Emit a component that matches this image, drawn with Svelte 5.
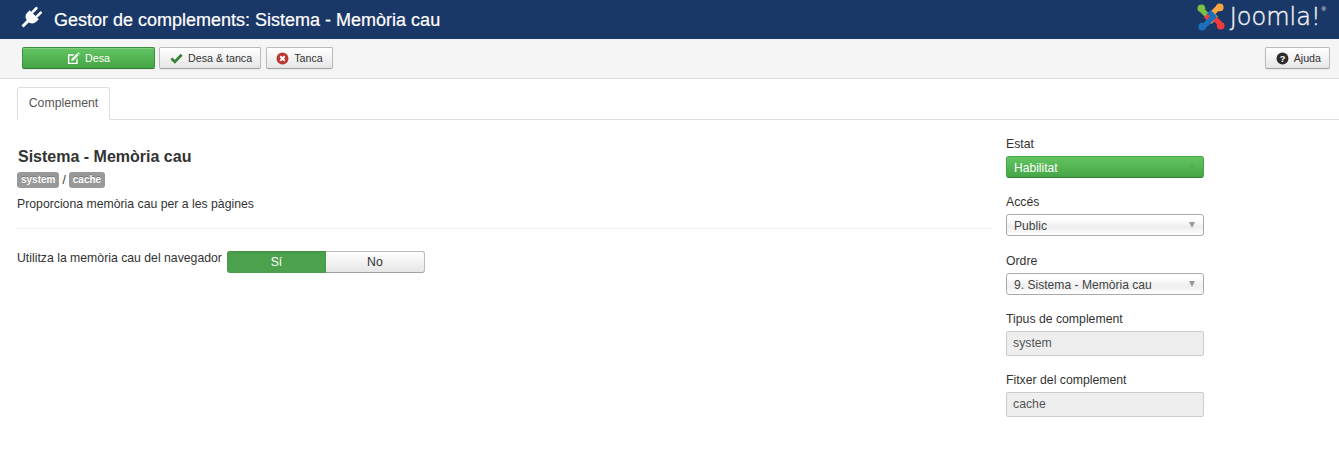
<script>
  const sideFields = [
    { label: 'Accés', value: 'Public' },
    { label: 'Ordre', value: '9. Sistema - Memòria cau' }
  ];
  const readonlyFields = [
    { label: 'Tipus de complement', value: 'system' },
    { label: 'Fitxer del complement', value: 'cache' }
  ];
  // the four logo arms are one shape turned around the centre
  const arms = [
    { angle: 0, color: '#7ac143' },
    { angle: 90, color: '#f9a541' },
    { angle: 180, color: '#ee3c3c' },
    { angle: 270, color: '#1c6fb8' }
  ];
</script>

<header class="topbar">
  <svg class="plug" viewBox="0 0 20 20" width="20" height="20" aria-hidden="true">
    <g fill="#fff" transform="rotate(45 10 10)">
      <rect x="5.6" y="-2" width="2.6" height="8" rx="1.3" />
      <rect x="11.8" y="-2" width="2.6" height="8" rx="1.3" />
      <path d="M3.6 5.4 H16.4 V8.6 Q16.4 13.6 11.6 14.6 H8.4 Q3.6 13.6 3.6 8.6 Z" />
      <rect x="8.5" y="14" width="3" height="8" />
    </g>
  </svg>
  <h1>Gestor de complements: Sistema - Memòria cau</h1>
  <div class="logo">
    <svg viewBox="0 0 32 32" width="28" height="28" aria-hidden="true">
      {#each arms as arm}
        <g transform="rotate({arm.angle} 16 16)">
          <path d="M5 7.5 L16.5 19 L22 13.5" fill="none" stroke={arm.color} stroke-width="6" stroke-linejoin="round" />
          <circle cx="5" cy="6" r="4.4" fill={arm.color} />
        </g>
      {/each}
    </svg>
    <span class="wordmark">Joomla!</span><sup>®</sup>
  </div>
</header>

<div class="toolbar">
  <button class="btn save">
    <svg viewBox="0 0 14 14" width="13" height="13" aria-hidden="true">
      <path fill="#fff" d="M1 2.5 H8 L6.6 4 H2.5 V11.5 H10 V8 L11.5 6.5 V13 H1 Z" />
      <path fill="#fff" d="M5 7.4 L10.8 1.6 L12.6 3.4 L6.8 9.2 L4.6 9.6 Z M11.4 1 L12.2 0.4 L13.8 2 L13.2 2.8 Z" />
    </svg>
    Desa
  </button>
  <button class="btn">
    <svg viewBox="0 0 14 14" width="13" height="13" aria-hidden="true">
      <path fill="none" stroke="#378137" stroke-width="3" d="M1.5 7 L5.2 10.6 L12.5 3" />
    </svg>
    Desa &amp; tanca
  </button>
  <button class="btn close">
    <svg viewBox="0 0 14 14" width="13" height="13" aria-hidden="true">
      <circle cx="7" cy="7" r="6.4" fill="#bd362f" />
      <path stroke="#fff" stroke-width="2" d="M4.6 4.6 L9.4 9.4 M9.4 4.6 L4.6 9.4" />
    </svg>
    Tanca
  </button>
  <button class="btn help">
    <svg viewBox="0 0 14 14" width="13" height="13" aria-hidden="true">
      <circle cx="7" cy="7" r="6.4" fill="#2c2c2c" />
      <text x="7" y="10.4" text-anchor="middle" class="qm">?</text>
    </svg>
    Ajuda
  </button>
</div>

<main>
  <nav class="tabs"><span class="tab">Complement</span></nav>

  <div class="columns">
    <section class="details">
      <h2>Sistema - Memòria cau</h2>
      <div class="badges"><span class="badge">system</span> / <span class="badge">cache</span></div>
      <p class="desc">Proporciona memòria cau per a les pàgines</p>
      <hr />
      <div class="option">
        <span>Utilitza la memòria cau del navegador</span>
        <div class="toggle">
          <span class="on">Sí</span>
          <span class="off">No</span>
        </div>
      </div>
    </section>

    <aside class="side">
      <div class="field">
        <span class="lbl">Estat</span>
        <div class="select green">Habilitat<i class="caret"></i></div>
      </div>
      {#each sideFields as f}
        <div class="field">
          <span class="lbl">{f.label}</span>
          <div class="select">{f.value}<i class="caret"></i></div>
        </div>
      {/each}
      {#each readonlyFields as f}
        <div class="field ro">
          <span class="lbl">{f.label}</span>
          <div class="input">{f.value}</div>
        </div>
      {/each}
    </aside>
  </div>
</main>

<style>
  :global(body) {
    margin: 0;
    background: #fff;
    font-family: "Liberation Sans", Arial, sans-serif;
    font-size: 12.25px;
    color: #333;
    overflow: hidden;
  }

  .topbar {
    height: 39px;
    background: #1a3867;
    display: flex;
    align-items: center;
    padding: 0 13px 0 21px;
    color: #fff;
  }
  .plug { margin-right: 13px; margin-top: -3px; overflow: visible; }
  h1 {
    margin: 0;
    font-size: 18px;
    font-weight: 400;
    line-height: 38px;
    -webkit-text-stroke: 0.2px #fff;
  }
  .logo {
    margin-left: auto;
    display: flex;
    align-items: center;
    gap: 5px;
    height: 39px;
  }
  .logo svg { margin-top: -6px; }
  .wordmark {
    font-family: "DejaVu Sans", Lato, sans-serif;
    font-weight: 200;
    font-size: 24px;
    line-height: 30px;
    margin-top: -5px;
    color: #f2f2f2;
    -webkit-text-stroke: 0.4px #f2f2f2;
  }
  sup {
    font-size: 6px;
    line-height: 6px;
    align-self: flex-start;
    margin: 6px 0 0 -4px;
  }

  .toolbar {
    height: 40px;
    box-sizing: border-box;
    padding: 8px 9px 0 22px;
    background: #f5f5f5;
    border-bottom: 1px solid #ddd;
    display: flex;
    align-items: flex-start;
    gap: 5px;
  }
  .btn {
    height: 22px;
    padding: 0 8px 0 10px;
    display: flex;
    align-items: center;
    justify-content: center;
    gap: 5px;
    font: 10.7px "Liberation Sans", Arial, sans-serif;
    color: #333;
    background: linear-gradient(#fff, #e6e6e6);
    border: 1px solid #bbb;
    border-bottom-color: #a2a2a2;
    border-radius: 2px;
    box-shadow: inset 0 1px 0 rgba(255, 255, 255, 0.2), 0 1px 2px rgba(0, 0, 0, 0.05);
  }
  .save {
    width: 133px;
    margin-right: -1px;
    padding: 0 9px;
    color: #fff;
    background: linear-gradient(#62c462, #46a546);
    border-color: #3f8e3f #3f8e3f #2f7a2f;
  }
  .close { padding: 0 9px; }
  .help { margin-left: auto; padding-left: 10px; }
  .qm {
    font: bold 10px "Liberation Sans", sans-serif;
    fill: #fff;
  }

  main { padding: 7px 0 0 17px; }
  .tabs {
    height: 33px;
    display: flex;
    align-items: flex-end;
    border-bottom: 1px solid #ddd;
  }
  .tab {
    height: 33px;
    width: 93px;
    box-sizing: border-box;
    margin-bottom: -1px;
    background: #fff;
    border: 1px solid #ddd;
    border-bottom-color: #fff;
    border-radius: 3px 3px 0 0;
    color: #555;
    text-align: center;
    line-height: 30px;
  }

  .columns {
    display: flex;
    gap: 14px;
  }
  .details { width: 975px; padding-top: 28px; }
  h2 {
    margin: 0 0 0 1px;
    font-size: 16px;
    line-height: 18px;
    font-weight: 700;
    color: #333;
  }
  .badges {
    margin-top: 6px;
    height: 16px;
    display: flex;
    align-items: center;
    gap: 3px;
    font-size: 12px;
  }
  .badge {
    background: #999;
    color: #fff;
    font-size: 10px;
    font-weight: 700;
    line-height: 16px;
    padding: 0 4px;
    border-radius: 3px;
    text-shadow: 0 -1px 0 rgba(0, 0, 0, 0.25);
  }
  .desc { margin: 8px 0 0; line-height: 16px; }
  hr {
    margin: 16px 0 0;
    border: 0;
    border-top: 1px solid #eee;
  }
  .option {
    margin-top: 22px;
    display: flex;
    align-items: flex-start;
    gap: 5px;
    line-height: 14px;
  }
  .toggle {
    display: flex;
    width: 198px;
    height: 22px;
  }
  .toggle span {
    text-align: center;
    line-height: 22px;
    box-sizing: border-box;
  }
  .on {
    flex: 0 0 99px;
    background: #4ca14c;
    color: #fff;
    border-radius: 3px 0 0 3px;
    box-shadow: inset 0 1px 2px rgba(0, 0, 0, 0.15);
  }
  .off {
    flex: 1;
    background: linear-gradient(#fff, #e6e6e6);
    border: 1px solid #bbb;
    border-left: 0;
    border-bottom-color: #a2a2a2;
    border-radius: 0 3px 3px 0;
    line-height: 20px !important;
  }

  .side { width: 198px; padding-top: 16px; }
  .field { height: 58px; }
  .field.ro { height: 61px; }
  .field:nth-child(2) { height: 59px; }
  .lbl {
    display: block;
    line-height: 16px;
    margin-bottom: 4px;
  }
  .select {
    position: relative;
    height: 22px;
    box-sizing: border-box;
    padding-left: 7px;
    line-height: 22px;
    font-size: 12.1px;
    color: #444;
    background: linear-gradient(#fff 20%, #eee 60%, #fff);
    border: 1px solid #aaa;
    border-radius: 3px;
  }
  .select.green {
    color: #fff;
    background: linear-gradient(#62c462, #46a546);
    border-color: #46a546 #46a546 #357e35;
  }
  .caret {
    position: absolute;
    right: 8px;
    top: 7px;
    border: 3.5px solid transparent;
    border-top: 6px solid #999;
    border-bottom: 0;
  }
  .green .caret { border-top-color: #56ad56; }
  .input {
    height: 25px;
    box-sizing: border-box;
    padding-left: 6px;
    line-height: 23px;
    background: #eee;
    border: 1px solid #ccc;
    border-radius: 2px;
    color: #555;
  }
</style>
